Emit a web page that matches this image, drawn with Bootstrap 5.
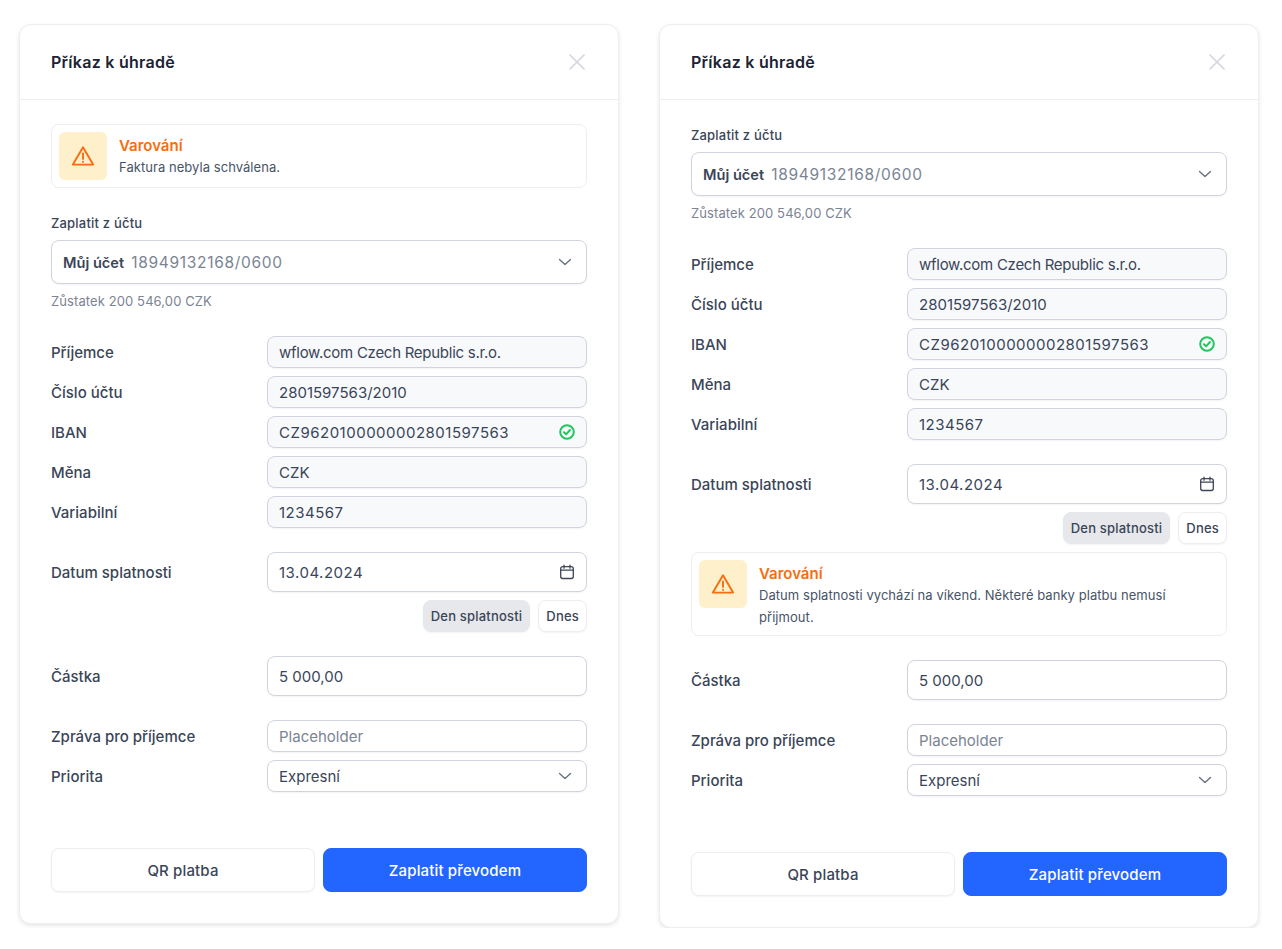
<!doctype html>
<html lang="cs"><head><meta charset="utf-8"><title>Příkaz k úhradě</title>
<link href="https://cdn.jsdelivr.net/npm/bootstrap@5.3.0/dist/css/bootstrap.min.css" rel="stylesheet">
<style>
body{background:#fff;font-family:"Inter",sans-serif;color:#3a4558;font-size:14px;margin:0}
.pay-page{padding:24px 0 0 19px;gap:40px;align-items:flex-start}
.pay-card{width:600px;flex:none;border:1px solid #eceef2;border-radius:12px;box-shadow:0 2px 4px rgba(16,24,40,.1);background:#fff}
.pay-head{height:75px;padding:0 31px;border-bottom:1px solid #eceef2}
.pay-title{font-size:16px;font-weight:600;color:#1a2233;margin:0;line-height:24px;letter-spacing:.27px}
.pay-close{width:18px;height:18px;padding:0;border:0;background:none;display:flex;margin-right:1px}
.pay-body{padding:24px 31px 31px}
.warn-box{border:1px solid #eceef2;border-radius:8px;padding:7px;gap:12px}
.warn-icon{width:48px;height:48px;flex:none;background:#fdf0cb;border-radius:6px}
.warn-title{font-size:15px;line-height:20px;font-weight:600;color:#f76d0f}
.warn-text{font-size:13px;line-height:22px;color:#475467;letter-spacing:.05px}
.warn-copy{padding-top:4px;max-width:440px}
.acc-label{font-size:13px;line-height:22px;font-weight:500;color:#3a4558;margin:0 0 6px;letter-spacing:.2px}
.acc-hint{font-size:13px;line-height:22px;color:#7b8494;margin-top:6px;letter-spacing:.1px}
.pay-select{height:44px;border:1px solid #cfd4de;border-radius:8px;padding:2px 11px 0;font-size:15px;line-height:22px;color:#3a4558;box-shadow:0 1px 2px rgba(16,24,40,.05);background-image:url("data:image/svg+xml,%3Csvg xmlns='http://www.w3.org/2000/svg' viewBox='0 0 16 16'%3E%3Cpath fill='none' stroke='%23667085' stroke-width='1.4' stroke-linecap='round' stroke-linejoin='round' d='M2.5 5.5 8 10.5l5.5-5'/%3E%3C/svg%3E");background-size:16px 16px;background-position:right 13px center}
.pay-select.slim{height:32px}
.acc-name{font-weight:600;margin-right:7px;font-size:14.6px}
.acc-num{color:#7b8494;font-size:15.5px;letter-spacing:.7px}
.row-line{display:flex;align-items:center;min-height:32px}
.row-label{width:216px;flex:none;font-size:15px;line-height:24px;padding-top:2px;font-weight:500;color:#3a4558}
.row-field{flex:1;position:relative;min-width:0}
.pay-input{height:32px;border:1px solid #cfd4de;border-radius:8px;padding:0 11px;font-size:15px;color:#3a4558;box-shadow:0 1px 2px rgba(16,24,40,.05)}
.pay-input[readonly]{background:#f8f9fb}
.pay-input.tall{height:40px}
.pay-input::placeholder{color:#7b8494}
.val-tight{letter-spacing:-.27px}
.val-wide{letter-spacing:.5px}
.field-mark{position:absolute;right:12px;top:50%;transform:translateY(-50%);display:flex}
.stack-8{display:flex;flex-direction:column;gap:8px}
.sect{margin-top:24px}
.quick-btn{height:32px;padding:0 7px;font-size:13px;font-weight:500;line-height:1;letter-spacing:.2px;border:1px solid #eceef2;border-radius:8px;color:#3a4558;background:#fff;box-shadow:0 1px 2px rgba(16,24,40,.05)}
.quick-btn.on{background:#e6e8ec;border-color:#e6e8ec}
.pay-foot{margin-top:56px;gap:8px}
.foot-btn{flex:1;height:44px;padding:2px 6px 0;font-size:15px;font-weight:500;letter-spacing:.15px;border-radius:8px}
.foot-ghost{background:#fff;border:1px solid #eceef2;color:#3a4558;box-shadow:0 1px 2px rgba(16,24,40,.05)}
.foot-main{background:#2366ff;border:1px solid #2366ff;color:#fff}
</style></head><body>
<div class="d-flex pay-page">

<div class="pay-card">
 <div class="pay-head d-flex align-items-center justify-content-between">
  <h1 class="pay-title">Příkaz k úhradě</h1>
  <button class="pay-close" type="button" aria-label="Zavřít"><svg width="18" height="18" viewBox="0 0 18 18"><path d="M2 2 16 16M16 2 2 16" stroke="#d3d6df" stroke-width="1.7" stroke-linecap="round"/></svg></button>
 </div>
 <div class="pay-body">
  <div class="warn-box d-flex align-items-start mb-4">
   <div class="warn-icon d-flex align-items-center justify-content-center"><svg width="24" height="24" viewBox="0 0 24 24" fill="none" stroke="#f76d0f" stroke-width="1.9" stroke-linecap="round" stroke-linejoin="round"><path d="M12 3.2 1.9 20.6h20.2z"/><path d="M12 9.5v5.4M12 17.8v.1"/></svg></div>
   <div class="warn-copy"><div class="warn-title">Varování</div><div class="warn-text">Faktura nebyla schválena.</div></div>
  </div>
  <p class="acc-label">Zaplatit z účtu</p>
  <div class="form-select pay-select d-flex align-items-center"><span class="acc-name">Můj účet</span><span class="acc-num">18949132168/0600</span></div>
  <div class="acc-hint">Zůstatek 200 546,00 CZK</div>
  <div class="stack-8 sect">
   <div class="row-line"><span class="row-label">Příjemce</span><div class="row-field"><input class="form-control pay-input val-tight" readonly value="wflow.com Czech Republic s.r.o."></div></div>
   <div class="row-line"><span class="row-label">Číslo účtu</span><div class="row-field"><input class="form-control pay-input" readonly value="2801597563/2010"></div></div>
   <div class="row-line"><span class="row-label">IBAN</span><div class="row-field"><input class="form-control pay-input val-wide" readonly value="CZ9620100000002801597563"><span class="field-mark"><svg width="16" height="16" viewBox="0 0 16 16" fill="none" stroke="#22c55e" stroke-width="2" stroke-linecap="round" stroke-linejoin="round"><circle cx="8" cy="8" r="6.8"/><path d="m5 8.2 2.1 2.1L11 6"/></svg></span></div></div>
   <div class="row-line"><span class="row-label">Měna</span><div class="row-field"><input class="form-control pay-input" readonly value="CZK"></div></div>
   <div class="row-line"><span class="row-label">Variabilní</span><div class="row-field"><input class="form-control pay-input val-wide" readonly value="1234567"></div></div>
  </div>
  <div class="sect">
   <div class="row-line"><span class="row-label">Datum splatnosti</span><div class="row-field"><input class="form-control pay-input tall val-wide" value="13.04.2024"><span class="field-mark"><svg width="16" height="16" viewBox="0 0 16 16" fill="none" stroke="#3b4558" stroke-width="1.3" stroke-linecap="round" stroke-linejoin="round"><rect x="1.7" y="2.7" width="12.6" height="11.8" rx="2"/><path d="M1.7 6.2h12.6M5 1.2v3M11 1.2v3"/></svg></span></div></div>
   <div class="d-flex justify-content-end gap-2 mt-2"><button type="button" class="quick-btn on">Den splatnosti</button><button type="button" class="quick-btn">Dnes</button></div>
  </div>
  <div class="sect row-line"><span class="row-label">Částka</span><div class="row-field"><input class="form-control pay-input tall" value="5 000,00"></div></div>
  <div class="stack-8 sect">
   <div class="row-line"><span class="row-label">Zpráva pro příjemce</span><div class="row-field"><input class="form-control pay-input" placeholder="Placeholder"></div></div>
   <div class="row-line"><span class="row-label">Priorita</span><div class="row-field"><div class="form-select pay-select slim d-flex align-items-center">Expresní</div></div></div>
  </div>
  <div class="d-flex pay-foot"><button type="button" class="foot-btn foot-ghost">QR platba</button><button type="button" class="foot-btn foot-main">Zaplatit převodem</button></div>
 </div>
</div>

<div class="pay-card">
 <div class="pay-head d-flex align-items-center justify-content-between">
  <h1 class="pay-title">Příkaz k úhradě</h1>
  <button class="pay-close" type="button" aria-label="Zavřít"><svg width="18" height="18" viewBox="0 0 18 18"><path d="M2 2 16 16M16 2 2 16" stroke="#d3d6df" stroke-width="1.7" stroke-linecap="round"/></svg></button>
 </div>
 <div class="pay-body">
  <p class="acc-label">Zaplatit z účtu</p>
  <div class="form-select pay-select d-flex align-items-center"><span class="acc-name">Můj účet</span><span class="acc-num">18949132168/0600</span></div>
  <div class="acc-hint">Zůstatek 200 546,00 CZK</div>
  <div class="stack-8 sect">
   <div class="row-line"><span class="row-label">Příjemce</span><div class="row-field"><input class="form-control pay-input val-tight" readonly value="wflow.com Czech Republic s.r.o."></div></div>
   <div class="row-line"><span class="row-label">Číslo účtu</span><div class="row-field"><input class="form-control pay-input" readonly value="2801597563/2010"></div></div>
   <div class="row-line"><span class="row-label">IBAN</span><div class="row-field"><input class="form-control pay-input val-wide" readonly value="CZ9620100000002801597563"><span class="field-mark"><svg width="16" height="16" viewBox="0 0 16 16" fill="none" stroke="#22c55e" stroke-width="2" stroke-linecap="round" stroke-linejoin="round"><circle cx="8" cy="8" r="6.8"/><path d="m5 8.2 2.1 2.1L11 6"/></svg></span></div></div>
   <div class="row-line"><span class="row-label">Měna</span><div class="row-field"><input class="form-control pay-input" readonly value="CZK"></div></div>
   <div class="row-line"><span class="row-label">Variabilní</span><div class="row-field"><input class="form-control pay-input val-wide" readonly value="1234567"></div></div>
  </div>
  <div class="sect">
   <div class="row-line"><span class="row-label">Datum splatnosti</span><div class="row-field"><input class="form-control pay-input tall val-wide" value="13.04.2024"><span class="field-mark"><svg width="16" height="16" viewBox="0 0 16 16" fill="none" stroke="#3b4558" stroke-width="1.3" stroke-linecap="round" stroke-linejoin="round"><rect x="1.7" y="2.7" width="12.6" height="11.8" rx="2"/><path d="M1.7 6.2h12.6M5 1.2v3M11 1.2v3"/></svg></span></div></div>
   <div class="d-flex justify-content-end gap-2 mt-2"><button type="button" class="quick-btn on">Den splatnosti</button><button type="button" class="quick-btn">Dnes</button></div>
   <div class="warn-box d-flex align-items-start mt-2">
    <div class="warn-icon d-flex align-items-center justify-content-center"><svg width="24" height="24" viewBox="0 0 24 24" fill="none" stroke="#f76d0f" stroke-width="1.9" stroke-linecap="round" stroke-linejoin="round"><path d="M12 3.2 1.9 20.6h20.2z"/><path d="M12 9.5v5.4M12 17.8v.1"/></svg></div>
    <div class="warn-copy"><div class="warn-title">Varování</div><div class="warn-text">Datum splatnosti vychází na víkend. Některé banky platbu nemusí přijmout.</div></div>
   </div>
  </div>
  <div class="sect row-line"><span class="row-label">Částka</span><div class="row-field"><input class="form-control pay-input tall" value="5 000,00"></div></div>
  <div class="stack-8 sect">
   <div class="row-line"><span class="row-label">Zpráva pro příjemce</span><div class="row-field"><input class="form-control pay-input" placeholder="Placeholder"></div></div>
   <div class="row-line"><span class="row-label">Priorita</span><div class="row-field"><div class="form-select pay-select slim d-flex align-items-center">Expresní</div></div></div>
  </div>
  <div class="d-flex pay-foot"><button type="button" class="foot-btn foot-ghost">QR platba</button><button type="button" class="foot-btn foot-main">Zaplatit převodem</button></div>
 </div>
</div>

</div>
</body></html>
